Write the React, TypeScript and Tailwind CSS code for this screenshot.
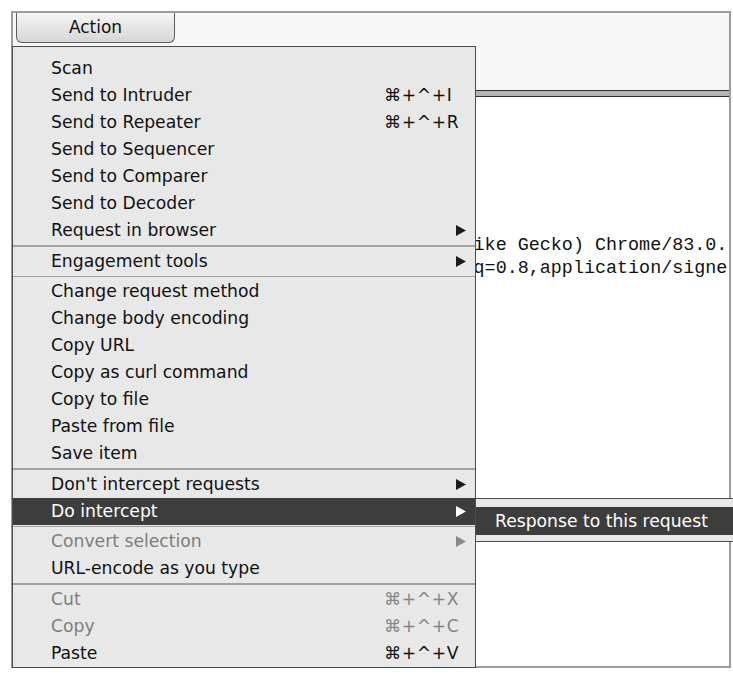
import React from "react";

type Item = {
  label: string;
  shortcut?: string;
  submenu?: boolean;
  disabled?: boolean;
  active?: boolean;
};

// null marks a separator line
const items: (Item | null)[] = [
  { label: "Scan" },
  { label: "Send to Intruder", shortcut: "⌘+^+I" },
  { label: "Send to Repeater", shortcut: "⌘+^+R" },
  { label: "Send to Sequencer" },
  { label: "Send to Comparer" },
  { label: "Send to Decoder" },
  { label: "Request in browser", submenu: true },
  null,
  { label: "Engagement tools", submenu: true },
  null,
  { label: "Change request method" },
  { label: "Change body encoding" },
  { label: "Copy URL" },
  { label: "Copy as curl command" },
  { label: "Copy to file" },
  { label: "Paste from file" },
  { label: "Save item" },
  null,
  { label: "Don't intercept requests", submenu: true },
  { label: "Do intercept", submenu: true, active: true },
  null,
  { label: "Convert selection", submenu: true, disabled: true },
  { label: "URL-encode as you type" },
  null,
  { label: "Cut", shortcut: "⌘+^+X", disabled: true },
  { label: "Copy", shortcut: "⌘+^+C", disabled: true },
  { label: "Paste", shortcut: "⌘+^+V" },
];

function Arrow({ color }: { color: string }) {
  return (
    <svg width="10" height="11" viewBox="0 0 10 11" className="mr-[9px] shrink-0">
      <polygon points="0,0 10,5.5 0,11" fill={color} />
    </svg>
  );
}

function MenuRow({ item }: { item: Item }) {
  const text = item.active
    ? "text-white"
    : item.disabled
      ? "text-[#7d7d7d]"
      : "text-[#111]";
  const arrowColor = item.active ? "#ffffff" : item.disabled ? "#8a8a8a" : "#1c1c1c";
  return (
    <div
      className={`flex items-center h-[27px] leading-[27px] pl-[38px] ${
        item.active ? "bg-[#3d3d3d]" : ""
      } ${text}`}
    >
      <span className="flex-1 whitespace-nowrap">{item.label}</span>
      {item.shortcut && (
        <span
          className={`w-[73px] mr-[18px] whitespace-nowrap tracking-[0.6px] ${
            item.disabled ? "text-[#858585]" : "text-[#111]"
          }`}
        >
          {item.shortcut}
        </span>
      )}
      {item.submenu && <Arrow color={arrowColor} />}
    </div>
  );
}

export default function App() {
  return (
    <div
      className="w-[733px] h-[675px] bg-white pt-[11px] pl-[11px] overflow-hidden"
      style={{ fontFamily: '"DejaVu Sans", "Liberation Sans", sans-serif' }}
    >
      <div className="relative w-[720px] h-[657px] border-2 border-[#9c9c9c] flex flex-col">
        {/* Tab strip with the Action button */}
        <div className="h-[77px] bg-[#f7f7f7] pl-[3px]">
          <button className="w-[159px] h-[30px] border border-t-0 border-[#5c5c5c] rounded-b-[6px] bg-gradient-to-b from-[#f5f5f5] to-[#d6d6d6] text-[17px] text-[#111] leading-[27px]">
            Action
          </button>
        </div>
        <div className="h-[7px] bg-[#b4b4b4] border-y border-[#2e2e2e]" />

        {/* Request editor, mostly hidden behind the menu */}
        <div className="flex-1 bg-white overflow-hidden pt-[137px] pl-[284px]">
          <div
            className="text-[18.4px] leading-[23px] text-[#111] whitespace-pre"
            style={{ fontFamily: '"Liberation Mono", "Courier New", monospace' }}
          >
            <div>537.36 (KHTML, like Gecko) Chrome/83.0.</div>
            <div>,image/apng,*/*;q=0.8,application/signe</div>
          </div>
        </div>

        {/* Context menu */}
        <div className="absolute left-[-1px] top-[33px] w-[464px] bg-[#e8e8e8] border border-[#4d4d4d] pt-[8px] text-[17.2px]">
          {items.map((item, i) =>
            item ? (
              <MenuRow key={i} item={item} />
            ) : (
              <div key={i} className="my-[1px] h-[1.5px] bg-[#a3a3a3]" />
            )
          )}
        </div>

        {/* Submenu for "Do intercept" */}
        <div className="absolute left-[463px] top-[485px] w-[260px] bg-[#e8e8e8] border-y border-[#4d4d4d] pt-[8px] pb-[6px] text-[17.2px]">
          <div className="h-[28px] leading-[28px] bg-[#3d3d3d] text-white pl-[19px] whitespace-nowrap">
            Response to this request
          </div>
        </div>
      </div>
    </div>
  );
}
